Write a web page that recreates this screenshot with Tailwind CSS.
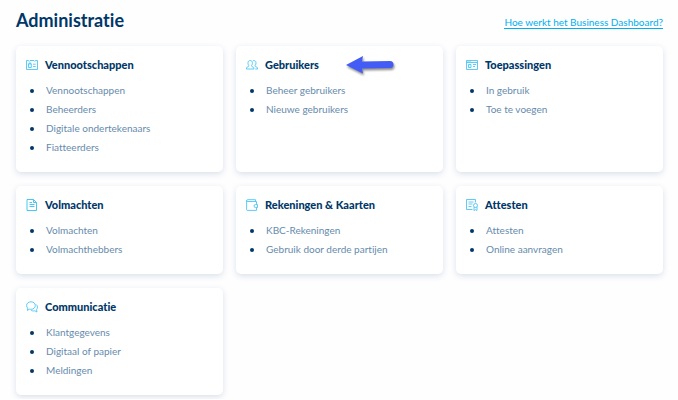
<!DOCTYPE html>
<html lang="nl">
<head>
<meta charset="utf-8">
<meta name="viewport" content="width=device-width, initial-scale=1">
<title>Administratie</title>
<script src="https://cdn.jsdelivr.net/npm/@tailwindcss/browser@4"></script>
</head>
<body class="bg-[#fefeff] font-[Lato,sans-serif] text-[#003768] [font-variant-ligatures:none]">
<main class="pr-[15px] pl-4 pb-1">
  <header class="flex h-[46px] items-start justify-between pt-2">
    <h1 class="text-[18px] leading-6 font-bold">Administratie</h1>
    <a href="#" class="mt-2 border-b border-[#00aeef] text-[10px] leading-3 text-[#00aeef]">Hoe werkt het Business Dashboard?</a>
  </header>
  <div class="grid grid-cols-3 gap-x-[13px] gap-y-[14px]">

    <section class="rounded-[5px] bg-white px-[10px] pt-[9px] pb-[15px] shadow-[0_2px_6px_rgba(0,55,104,0.15)]">
      <h2 class="flex h-5 items-center gap-[7px] text-[11px] font-black">
        <svg class="size-3 text-[#35bff3]" viewBox="0 0 12 12" fill="none" stroke="currentColor" stroke-width=".8" aria-hidden="true"><path d="M.5 1.500h2l.7.9.8-.9h4l.8.9.7-.9h2v9H.5z"/><path d="M2.500 5h2.800v3.500H2.500zM3 5V4h1.800v1M7 5.200h2.700M7 7.500h2.700"/></svg>
        Vennootschappen</h2>
      <ul class="mt-[6px] list-none text-[10px] leading-[19px] text-[#668bac]">
        <li class="flex items-center gap-3 pl-1"><span class="size-1 rounded-full bg-[#003768]"></span><a href="#">Vennootschappen</a></li>
        <li class="flex items-center gap-3 pl-1"><span class="size-1 rounded-full bg-[#003768]"></span><a href="#">Beheerders</a></li>
        <li class="flex items-center gap-3 pl-1"><span class="size-1 rounded-full bg-[#003768]"></span><a href="#">Digitale ondertekenaars</a></li>
        <li class="flex items-center gap-3 pl-1"><span class="size-1 rounded-full bg-[#003768]"></span><a href="#">Fiatteerders</a></li>
      </ul>
    </section>

    <section class="relative rounded-[5px] bg-white px-[10px] pt-[9px] pb-[15px] shadow-[0_2px_6px_rgba(0,55,104,0.15)]">
      <h2 class="flex h-5 items-center gap-[7px] text-[11px] font-black">
        <svg class="size-3 text-[#35bff3]" viewBox="0 0 12 12" fill="none" stroke="currentColor" stroke-width=".8" aria-hidden="true"><path d="M.5 10V8.800c0-.8 2.300-1 2.300-1.700v-.6C2 5.500 2 4.500 2 3.700 2 2.300 3 1.500 4.200 1.500s2.200.8 2.200 2.200c0 .8 0 1.800-.8 2.800v.6c0 .7 2.300.9 2.300 1.700V10z"/><path d="M7 1.700c1.600-.4 3 .4 3 2.100 0 .8-.1 1.900-.9 2.700v.6c0 .7 2.400.9 2.400 1.700V10H9.300"/></svg>
        Gebruikers</h2>
      <svg class="absolute top-[8px] left-[110px] h-6 w-[50px] drop-shadow-[1px_2px_1px_rgba(0,0,0,0.45)]" viewBox="0 0 50 24" fill="#425cf5" aria-hidden="true"><path d="M0 11 17 2l-1 5.500 28-.5a3 3 0 0 1 0 7l-28 .5 1 5z"/></svg>
      <ul class="mt-[6px] list-none text-[10px] leading-[19px] text-[#668bac]">
        <li class="flex items-center gap-3 pl-1"><span class="size-1 rounded-full bg-[#003768]"></span><a href="#">Beheer gebruikers</a></li>
        <li class="flex items-center gap-3 pl-1"><span class="size-1 rounded-full bg-[#003768]"></span><a href="#">Nieuwe gebruikers</a></li>
      </ul>
    </section>

    <section class="rounded-[5px] bg-white px-[10px] pt-[9px] pb-[15px] shadow-[0_2px_6px_rgba(0,55,104,0.15)]">
      <h2 class="flex h-5 items-center gap-[7px] text-[11px] font-black">
        <svg class="size-3 text-[#35bff3]" viewBox="0 0 12 12" fill="none" stroke="currentColor" stroke-width=".8" aria-hidden="true"><path d="M.5 1.500h11v9H.5zM.5 3.500h11M1.500 2.500h1M3.500 2.500h1M2.500 5.500H5v3H2.500zM7 5.500h3M7 7.500h2"/></svg>
        Toepassingen</h2>
      <ul class="mt-[6px] list-none text-[10px] leading-[19px] text-[#668bac]">
        <li class="flex items-center gap-3 pl-1"><span class="size-1 rounded-full bg-[#003768]"></span><a href="#">In gebruik</a></li>
        <li class="flex items-center gap-3 pl-1"><span class="size-1 rounded-full bg-[#003768]"></span><a href="#">Toe te voegen</a></li>
      </ul>
    </section>

    <section class="rounded-[5px] bg-white px-[10px] pt-[9px] pb-[15px] shadow-[0_2px_6px_rgba(0,55,104,0.15)]">
      <h2 class="flex h-5 items-center gap-[7px] text-[11px] font-black">
        <svg class="size-3 text-[#35bff3]" viewBox="0 0 12 12" fill="none" stroke="currentColor" stroke-width=".9" aria-hidden="true"><path d="M1 .5h6.500l3 3v8H1zM7.500.5v3h3M3.500 3.500H6M3.500 5.500h5M3.500 7.500h5"/></svg>
        Volmachten</h2>
      <ul class="mt-[6px] list-none text-[10px] leading-[19px] text-[#668bac]">
        <li class="flex items-center gap-3 pl-1"><span class="size-1 rounded-full bg-[#003768]"></span><a href="#">Volmachten</a></li>
        <li class="flex items-center gap-3 pl-1"><span class="size-1 rounded-full bg-[#003768]"></span><a href="#">Volmachthebbers</a></li>
      </ul>
    </section>

    <section class="rounded-[5px] bg-white px-[10px] pt-[9px] pb-[15px] shadow-[0_2px_6px_rgba(0,55,104,0.15)]">
      <h2 class="flex h-5 items-center gap-[7px] text-[11px] font-black">
        <svg class="size-3 text-[#35bff3]" viewBox="0 0 12 12" fill="none" stroke="currentColor" stroke-width=".8" aria-hidden="true"><path d="M10.500 5V2.500H1.700C.3 2.500.3.700 1.700.7H9.500v1.800M.6 1.500v9c0 .6.300.9.900.9h9V9M11.500 5.500H9.500a1.500 1.500 0 0 0 0 3h2z"/></svg>
        Rekeningen &amp; Kaarten</h2>
      <ul class="mt-[6px] list-none text-[10px] leading-[19px] text-[#668bac]">
        <li class="flex items-center gap-3 pl-1"><span class="size-1 rounded-full bg-[#003768]"></span><a href="#">KBC-Rekeningen</a></li>
        <li class="flex items-center gap-3 pl-1"><span class="size-1 rounded-full bg-[#003768]"></span><a href="#">Gebruik door derde partijen</a></li>
      </ul>
    </section>

    <section class="rounded-[5px] bg-white px-[10px] pt-[9px] pb-[15px] shadow-[0_2px_6px_rgba(0,55,104,0.15)]">
      <h2 class="flex h-5 items-center gap-[7px] text-[11px] font-black">
        <svg class="size-3 text-[#35bff3]" viewBox="0 0 12 12" fill="none" stroke="currentColor" stroke-width=".8" aria-hidden="true"><path d="M6.500 10.500h-6V.5h9v3M2.500 3h5M2.500 5h4M2.500 7.500h3"/><circle cx="9.500" cy="6.500" r="2"/><path d="M8 8v3.500l1.500-.8 1.500.8V8"/></svg>
        Attesten</h2>
      <ul class="mt-[6px] list-none text-[10px] leading-[19px] text-[#668bac]">
        <li class="flex items-center gap-3 pl-1"><span class="size-1 rounded-full bg-[#003768]"></span><a href="#">Attesten</a></li>
        <li class="flex items-center gap-3 pl-1"><span class="size-1 rounded-full bg-[#003768]"></span><a href="#">Online aanvragen</a></li>
      </ul>
    </section>

    <section class="rounded-[5px] bg-white px-[10px] pt-[9px] pb-[15px] shadow-[0_2px_6px_rgba(0,55,104,0.15)]">
      <h2 class="flex h-5 items-center gap-[7px] text-[11px] font-black">
        <svg class="size-3 text-[#35bff3]" viewBox="0 0 12 12" fill="none" stroke="currentColor" stroke-width=".8" aria-hidden="true"><path d="M5 .8c2.500 0 4.300 1.500 4.300 3.700S7.500 8.300 5 8.300c-.5 0-1 0-1.400-.2L1.400 9.400l.3-2.200C1 6.500.6 5.600.6 4.500.6 2.300 2.500.8 5 .8z"/><path d="M10.200 3.500c1.600 1.300 1.700 3.600.4 5l.3 2.500-2-1.200c-1.600.4-3 .1-4-.6"/></svg>
        Communicatie</h2>
      <ul class="mt-[6px] list-none text-[10px] leading-[19px] text-[#668bac]">
        <li class="flex items-center gap-3 pl-1"><span class="size-1 rounded-full bg-[#003768]"></span><a href="#">Klantgegevens</a></li>
        <li class="flex items-center gap-3 pl-1"><span class="size-1 rounded-full bg-[#003768]"></span><a href="#">Digitaal of papier</a></li>
        <li class="flex items-center gap-3 pl-1"><span class="size-1 rounded-full bg-[#003768]"></span><a href="#">Meldingen</a></li>
      </ul>
    </section>

  </div>
</main>
</body>
</html>
